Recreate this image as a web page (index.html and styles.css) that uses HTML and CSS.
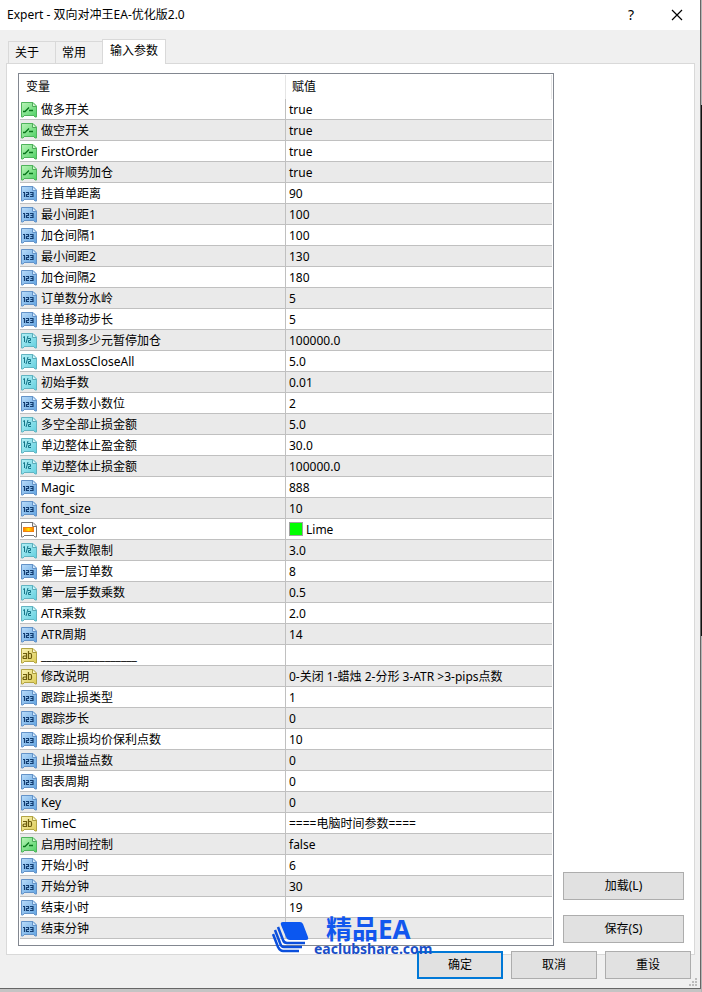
FILE: index.html
```html
<!DOCTYPE html>
<html lang="zh-CN">
<head>
<meta charset="utf-8">
<meta name="viewport" content="width=device-width, initial-scale=1">
<title>Expert - 双向对冲王EA-优化版2.0</title>
<link rel="stylesheet" href="styles.css">
</head>
<body>
<svg class="sprite" width="0" height="0" aria-hidden="true">
  <defs>
    <linearGradient id="g-green" x1="0" y1="0" x2="1" y2="1"><stop offset="0" stop-color="#baf5b8"/><stop offset="1" stop-color="#4fd065"/></linearGradient>
    <linearGradient id="g-blue" x1="0" y1="0" x2="1" y2="1"><stop offset="0" stop-color="#b9dcfa"/><stop offset="1" stop-color="#62a3e0"/></linearGradient>
    <linearGradient id="g-cyan" x1="0" y1="0" x2="1" y2="1"><stop offset="0" stop-color="#b5f0f6"/><stop offset="1" stop-color="#62cfdf"/></linearGradient>
    <linearGradient id="g-yellow" x1="0" y1="0" x2="1" y2="1"><stop offset="0" stop-color="#faf3b4"/><stop offset="1" stop-color="#dccb55"/></linearGradient>
    <linearGradient id="g-orange" x1="0" y1="0" x2="1" y2="0"><stop offset="0" stop-color="#ff7a00"/><stop offset=".5" stop-color="#ffe000"/><stop offset="1" stop-color="#ff7a00"/></linearGradient>
    <path id="sheet" d="M.5.5H12L15.500 4V15H14L13 14L12 13L11 14L10 13L9 14L8 13L7 14L6 13L5 14L4 13L3 14L2 15H.5Z"/>
    <path id="fold" d="M11.500 1V4.500H15"/>
    <symbol id="i-bool" viewBox="0 0 16 16"><use href="#sheet" fill="url(#g-green)" stroke="#4fb35c"/><use href="#fold" fill="#d5f8d3" stroke="#4fa95a"/><path d="M2 9.500H4L8 5.500M8 8.500H12" fill="none" stroke="#08751b" stroke-width="1.300"/></symbol>
    <symbol id="i-int" viewBox="0 0 16 16"><use href="#sheet" fill="url(#g-blue)" stroke="#6493c8"/><use href="#fold" fill="#d8ebfc" stroke="#6493c8"/><path d="M2 6.500H3.500V11M5 6.500H7.500V8.500H5.500V10.500H8M9 6.500H12V10.500H9M9.500 8.500H12" fill="none" stroke="#123c70" stroke-width="1.200"/></symbol>
    <symbol id="i-real" viewBox="0 0 16 16"><use href="#sheet" fill="url(#g-cyan)" stroke="#62b4c2"/><use href="#fold" fill="#d8f7fa" stroke="#5baab8"/><path d="M2 4.500L3.500 3.500V9M7 3L5 10M7 5.500H9.500V7.500H7.500V9.500H10" fill="none" stroke="#147488"/></symbol>
    <symbol id="i-color" viewBox="0 0 16 16"><use href="#sheet" fill="#fff" stroke="#777"/><use href="#fold" fill="#eee" stroke="#777"/><rect x="2.500" y="5.500" width="10" height="4" fill="url(#g-orange)" stroke="#f08010"/></symbol>
    <symbol id="i-text" viewBox="0 0 16 16"><use href="#sheet" fill="url(#g-yellow)" stroke="#b3a443"/><use href="#fold" fill="#fcf8d5" stroke="#aa9b3c"/><path d="M2 5.500H5.500V10.500H3Q2 10.500 2 9.500T3 8H5.500M7.500 3V10.500H9.500Q10.500 10.500 10.500 9V7Q10.500 5.500 9.500 5.500H7.500" fill="none" stroke="#6c5c0c" stroke-width="1.200"/></symbol>
  </defs>
</svg>
<div class="desktop">
<main class="window">
  <header class="titlebar">
    <h1>Expert - 双向对冲王EA-优化版2.0</h1>
    <button class="caption" type="button" aria-label="帮助">?</button>
    <button class="caption" type="button" aria-label="关闭"><svg width="12" height="12" viewBox="0 0 12 12"><path d="M1 1L11 11M11 1L1 11" stroke="#000" stroke-width="1.200"/></svg></button>
  </header>
  <nav class="tabs" role="tablist">
    <button type="button" role="tab">关于</button>
    <button type="button" role="tab">常用</button>
    <button type="button" role="tab" class="active" aria-selected="true">输入参数</button>
  </nav>
  <section class="panel">
    <div class="list">
      <table>
        <thead><tr><th scope="col">变量</th><th scope="col">赋值</th></tr></thead>
        <tbody>
          <tr><td><svg><use href="#i-bool"/></svg>做多开关</td><td>true</td></tr>
          <tr><td><svg><use href="#i-bool"/></svg>做空开关</td><td>true</td></tr>
          <tr><td><svg><use href="#i-bool"/></svg>FirstOrder</td><td>true</td></tr>
          <tr><td><svg><use href="#i-bool"/></svg>允许顺势加仓</td><td>true</td></tr>
          <tr><td><svg><use href="#i-int"/></svg>挂首单距离</td><td>90</td></tr>
          <tr><td><svg><use href="#i-int"/></svg>最小间距1</td><td>100</td></tr>
          <tr><td><svg><use href="#i-int"/></svg>加仓间隔1</td><td>100</td></tr>
          <tr><td><svg><use href="#i-int"/></svg>最小间距2</td><td>130</td></tr>
          <tr><td><svg><use href="#i-int"/></svg>加仓间隔2</td><td>180</td></tr>
          <tr><td><svg><use href="#i-int"/></svg>订单数分水岭</td><td>5</td></tr>
          <tr><td><svg><use href="#i-int"/></svg>挂单移动步长</td><td>5</td></tr>
          <tr><td><svg><use href="#i-real"/></svg>亏损到多少元暂停加仓</td><td>100000.0</td></tr>
          <tr><td><svg><use href="#i-real"/></svg>MaxLossCloseAll</td><td>5.0</td></tr>
          <tr><td><svg><use href="#i-real"/></svg>初始手数</td><td>0.01</td></tr>
          <tr><td><svg><use href="#i-int"/></svg>交易手数小数位</td><td>2</td></tr>
          <tr><td><svg><use href="#i-real"/></svg>多空全部止损金额</td><td>5.0</td></tr>
          <tr><td><svg><use href="#i-real"/></svg>单边整体止盈金额</td><td>30.0</td></tr>
          <tr><td><svg><use href="#i-real"/></svg>单边整体止损金额</td><td>100000.0</td></tr>
          <tr><td><svg><use href="#i-int"/></svg>Magic</td><td>888</td></tr>
          <tr><td><svg><use href="#i-int"/></svg>font_size</td><td>10</td></tr>
          <tr><td><svg><use href="#i-color"/></svg>text_color</td><td><span class="swatch"></span>Lime</td></tr>
          <tr><td><svg><use href="#i-real"/></svg>最大手数限制</td><td>3.0</td></tr>
          <tr><td><svg><use href="#i-int"/></svg>第一层订单数</td><td>8</td></tr>
          <tr><td><svg><use href="#i-real"/></svg>第一层手数乘数</td><td>0.5</td></tr>
          <tr><td><svg><use href="#i-real"/></svg>ATR乘数</td><td>2.0</td></tr>
          <tr><td><svg><use href="#i-int"/></svg>ATR周期</td><td>14</td></tr>
          <tr><td><svg><use href="#i-text"/></svg>__________________</td><td></td></tr>
          <tr><td><svg><use href="#i-text"/></svg>修改说明</td><td>0-关闭 1-蜡烛 2-分形 3-ATR &gt;3-pips点数</td></tr>
          <tr><td><svg><use href="#i-int"/></svg>跟踪止损类型</td><td>1</td></tr>
          <tr><td><svg><use href="#i-int"/></svg>跟踪步长</td><td>0</td></tr>
          <tr><td><svg><use href="#i-int"/></svg>跟踪止损均价保利点数</td><td>10</td></tr>
          <tr><td><svg><use href="#i-int"/></svg>止损增益点数</td><td>0</td></tr>
          <tr><td><svg><use href="#i-int"/></svg>图表周期</td><td>0</td></tr>
          <tr><td><svg><use href="#i-int"/></svg>Key</td><td>0</td></tr>
          <tr><td><svg><use href="#i-text"/></svg>TimeC</td><td>====电脑时间参数====</td></tr>
          <tr><td><svg><use href="#i-bool"/></svg>启用时间控制</td><td>false</td></tr>
          <tr><td><svg><use href="#i-int"/></svg>开始小时</td><td>6</td></tr>
          <tr><td><svg><use href="#i-int"/></svg>开始分钟</td><td>30</td></tr>
          <tr><td><svg><use href="#i-int"/></svg>结束小时</td><td>19</td></tr>
          <tr><td><svg><use href="#i-int"/></svg>结束分钟</td><td></td></tr>
        </tbody>
      </table>
      <div class="watermark">
        <svg width="37" height="31" viewBox="0 0 37 31"><path d="M11 0H28Q30 0 31 2L36 15Q37 18 34 18H18Q15 18 14 15L9 3Q8 0 11 0Z" fill="#0b57f0"/><path d="M6 5L11 18Q12 21 15 21H33M3 8L8 21Q9 25 12 25H30M1 12L6 25Q8 29 11 29H27" fill="none" stroke="#0b4fdc" stroke-width="2.500"/></svg>
        <div class="brand"><strong>精品EA</strong><span>eaclubshare.com</span></div>
      </div>
    </div>
    <div class="side">
      <button class="btn" type="button">加载(L)</button>
      <button class="btn" type="button">保存(S)</button>
    </div>
  </section>
  <footer class="actions">
    <button class="btn primary" type="button">确定</button>
    <button class="btn" type="button">取消</button>
    <button class="btn" type="button">重设</button>
  </footer>
  <svg class="grip" width="8" height="8" viewBox="0 0 8 8"><path d="M6 0h2v2h-2zM3 3h2v2h-2zM6 3h2v2h-2zM0 6h2v2h-2zM3 6h2v2h-2zM6 6h2v2h-2z" fill="#bdbdbd"/></svg>
</main>
</div>
</body>
</html>
```
FILE: styles.css
```css
* { box-sizing: border-box; }
body {
  margin: 0;
  background: #d2d2d2;
  color: #000;
  font: 12px/20px "Noto Sans", "Noto Sans CJK SC", sans-serif;
}
button { font: inherit; color: inherit; padding: 0; margin: 0; }
.sprite { position: absolute; }
.desktop {
  padding: 0 1px 3px 0;
  background: linear-gradient(#b4b4b4 0 105px, #111 105px 636px, #b4b4b4 636px);
}
.window {
  position: relative;
  background: #f0f0f0;
  border-right: 1px solid #666;
  border-bottom: 1px solid #666;
  box-shadow: 0 3px 0 #c4c4c4;
}
.titlebar { display: flex; align-items: center; height: 30px; background: #fff; }
.titlebar h1 { flex: 1; margin: 0; padding-left: 7px; font-size: 12px; font-weight: 400; }
.caption {
  display: flex;
  align-items: center;
  justify-content: center;
  width: 46px;
  height: 30px;
  border: 0;
  background: none;
  font-size: 14px;
}
.tabs { display: flex; align-items: flex-end; height: 34px; padding-left: 8px; }
.tabs button {
  height: 23px;
  width: 48px;
  padding-left: 6px;
  text-align: left;
  background: #f0f0f0;
  border: 1px solid #d9d9d9;
  margin-right: -1px;
}
.tabs .active {
  position: relative;
  z-index: 1;
  width: 64px;
  height: 25px;
  padding-left: 7px;
  padding-bottom: 3px;
  background: #fff;
  border-bottom: 0;
}
.panel {
  display: flex;
  gap: 9px;
  margin: -1px 5px 0 6px;
  padding: 9px 10px 8px 11px;
  background: #fff;
  border: 1px solid #d9d9d9;
}
.list { position: relative; flex: 1; border: 1px solid #828790; padding: 1px 1px 6px; }
table { width: 100%; border-collapse: separate; border-spacing: 0; table-layout: fixed; }
th { height: 24px; padding: 0 0 0 6px; text-align: left; font-weight: 400; border-right: 1px solid #e5e5e5; }
th:first-child { width: 50%; }
td { height: 21px; padding: 1px 0 0 3px; line-height: 19px; white-space: nowrap; border-bottom: 1px solid #c0c0c0; }
td:first-child { padding-left: 1px; border-right: 1px solid #c0c0c0; }
tbody tr:nth-child(even) { background: #eaeaea; }
td svg { width: 16px; height: 16px; margin: 2px 4px 0 0; vertical-align: top; }
.swatch {
  display: inline-block;
  width: 14px;
  height: 14px;
  margin: 2px 3px 0 0;
  vertical-align: top;
  background: #0f0;
  border: 1px solid #a0a0a0;
}
.side { display: flex; flex-direction: column; justify-content: flex-end; gap: 15px; width: 121px; padding-bottom: 3px; }
.btn { height: 28px; background: #e1e1e1; border: 1px solid #adadad; }
.actions { display: flex; justify-content: flex-end; gap: 8px; position: relative; margin-top: -4px; padding: 0 9px 9px 0; }
.actions .btn { width: 86px; }
.actions .primary { border: 2px solid #0078d7; }
.grip { position: absolute; right: 3px; bottom: 2px; }
.watermark { position: absolute; z-index: 2; left: 253px; bottom: -12px; display: flex; align-items: center; gap: 5px; color: #1257ee; pointer-events: none; }
.brand { display: flex; flex-direction: column; }
.brand strong { padding-left: 12px; font-size: 26px; line-height: 24px; }
.brand span { color: #1a4fc8; font-size: 14px; line-height: 16px; font-weight: 700; }
```
